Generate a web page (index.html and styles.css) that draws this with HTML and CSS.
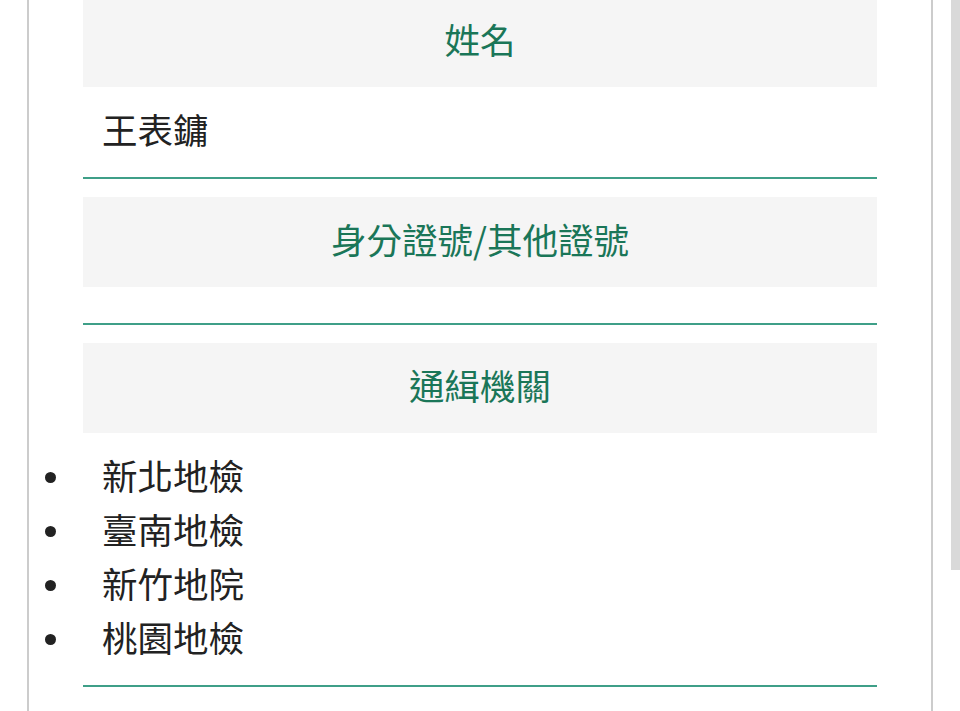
FILE: index.html
```html
<!DOCTYPE html>
<html lang="zh-Hant">
<head>
    <meta charset="UTF-8">
    <meta name="viewport" content="width=device-width, initial-scale=1.0">
    <title>通緝資料</title>
    <link rel="stylesheet" href="styles.css">
</head>
<body>
    <div class="page">
        <div class="sheet">
            <div class="field">
                <div class="field-title">姓名</div>
                <div class="field-value">王表鏞</div>
            </div>
            <div class="field">
                <div class="field-title">身分證號/其他證號</div>
                <div class="field-value"></div>
            </div>
            <div class="field">
                <div class="field-title">通緝機關</div>
                <ul class="field-list">
                    <li>新北地檢</li>
                    <li>臺南地檢</li>
                    <li>新竹地院</li>
                    <li>桃園地檢</li>
                </ul>
            </div>
        </div>
    </div>
    <div class="scrollbar">
        <div class="thumb"></div>
    </div>
</body>
</html>
```

FILE: styles.css
```css
html, body {
    margin: 0;
    height: 100%;
    overflow: hidden;
}

body {
    display: flex;
    background: #fff;
    font-family: "Noto Sans CJK TC", "Noto Sans", sans-serif;
    font-size: 35.5px;
    color: #222;
}

.page {
    margin-left: 27px;
    border-left: 2px solid #ccc;
    border-right: 2px solid #ccc;
    padding: 0 54px;
    width: 794px;
}

.sheet {
    margin-top: -3px;
}

.field {
    border-bottom: 2px solid #3f9f88;
    margin-bottom: 18px;
}

/* text sits a little high in its box */
.field-title {
    background: #f5f5f5;
    color: #1a7658;
    text-align: center;
    line-height: 54px;
    padding: 15px 19px 21px;
}

.field-value {
    line-height: 54px;
    padding: 15px 19px 21px;
}

.field-value:empty {
    padding: 18px 19px;
}

.field-list {
    margin: 0;
    padding: 15px 19px 21px;
    list-style: none;
}

.field-list li {
    line-height: 54px;
    position: relative;
}

.field-list li::before {
    content: '';
    position: absolute;
    left: -57px;
    top: 24px;
    width: 11px;
    height: 11px;
    border-radius: 50%;
    background: #222;
}

.scrollbar {
    margin-left: 18px;
    width: 9px;
}

.thumb {
    height: 570px;
    background: #d9d9d9;
}
```
